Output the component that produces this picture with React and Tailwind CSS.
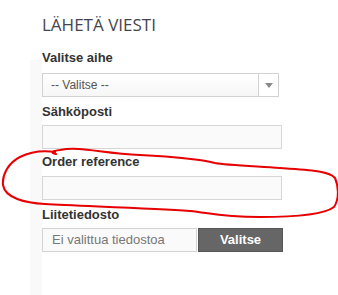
const labelCls = "block text-[13px] leading-4 font-bold text-[#333]";

const Field = ({ label, top, gap }) => (
	<div className={top}>
		<label className={labelCls}>{label}</label>
		<div className={`${gap} w-[240px] h-[24px] border border-[#d6d6d6] bg-[#fafafa]`} />
	</div>
);

const App = () => {
	return (
		<div
			className="relative w-[338px] h-[295px] bg-white overflow-hidden bg-[linear-gradient(to_right,transparent_30px,#f9f9f9_30px,#f9f9f9_42px,transparent_42px)] bg-no-repeat bg-bottom bg-[length:100%_235px]"
			style={{ fontFamily: '"Liberation Sans", Arial, sans-serif' }}
		>
			<div className="pl-[42px] pt-[15px]">
				<h2 className="text-[17px] leading-5 uppercase font-medium text-[#46454d] font-['Open_Sans',sans-serif]">
					Lähetä viesti
				</h2>

				<div className="mt-[15px]">
					<label className={labelCls}>Valitse aihe</label>
					<div className="mt-[7px] w-[237px] h-[24px] border border-[#d2d2d2] bg-[linear-gradient(to_bottom,#ffffff,#f6f6f6)] flex items-center">
						<span className="flex-1 pl-[8px] text-[12px] text-[#555]">-- Valitse --</span>
						<div className="w-[20px] h-[22px] border-l border-[#d2d2d2] bg-white flex items-center justify-center">
							<svg width="8" height="5" viewBox="0 0 8 5">
								<path d="M0 0 L8 0 L4 5 Z" fill="#8a8a8a" />
							</svg>
						</div>
					</div>
				</div>

				<Field label="Sähköposti" top="mt-[7px]" gap="mt-[5px]" />
				<Field label="Order reference" top="mt-[5px]" gap="mt-[6px]" />

				<div className="mt-[7px]">
					<label className={labelCls}>Liitetiedosto</label>
					<div className="mt-[5px] flex h-[24px]">
						<div className="w-[155px] border border-[#d2d2d2] bg-[#fafafa] flex items-center pl-[9px] text-[13px] text-[#777]">
							Ei valittua tiedostoa
						</div>
						<button className="ml-px w-[85px] border border-[#555] bg-[#666] text-white text-[13px] font-bold flex items-center justify-center">
							Valitse
						</button>
					</div>
				</div>
			</div>

			{/* red hand-drawn mark over the order reference field */}
			<svg className="absolute inset-0 pointer-events-none" width="338" height="295" viewBox="0 0 338 295">
				<path
					d="M55 152 C40 150, 30 152, 20 157 C8 163, 2 175, 3 185 C5 198, 25 203, 45 204 C80 206, 150 208, 190 211 C210 213, 220 217, 260 217 C300 217, 325 214, 334 207 C340 198, 338 185, 335 178 C329 171, 310 170, 280 168 C250 166, 225 165, 215 163 C200 159, 180 157, 140 155 C100 153, 80 146, 60 150 C52 151, 50 153, 56 154"
					fill="none"
					stroke="#e60000"
					strokeWidth="2"
					strokeLinecap="round"
				/>
			</svg>
		</div>
	);
};

export default App;
